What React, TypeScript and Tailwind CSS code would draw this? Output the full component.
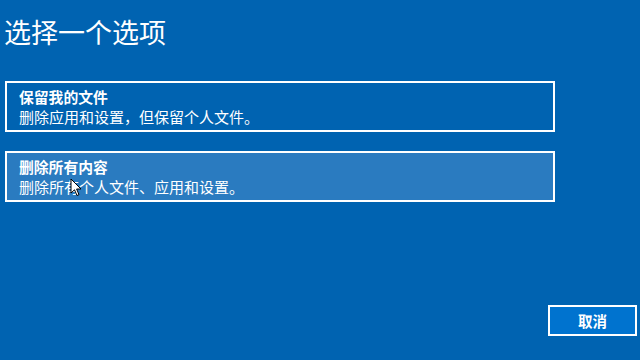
import React from 'react';

const font = { fontFamily: '"Noto Sans CJK SC", "Noto Sans", sans-serif' };

function Option({ title, desc, hover }: { title: string; desc: string; hover?: boolean }) {
  return (
    <button
      type="button"
      className={
        'flex h-[51px] w-[550px] flex-col justify-center border-2 border-white px-[12px] text-left text-white ' +
        (hover ? 'bg-[#2a7bc0]' : 'bg-[#0063b1]')
      }
    >
      <span className="text-[14.8px] font-bold leading-[19.5px]">{title}</span>
      <span className="text-[15px] leading-[19.5px]">{desc}</span>
    </button>
  );
}

export default function App() {
  return (
    <div className="relative flex h-[360px] w-[640px] flex-col overflow-hidden bg-[#0063b1] text-white" style={font}>
      <h1 className="ml-[4px] mt-[15px] text-[27px] font-normal leading-[34px]">选择一个选项</h1>

      <div className="ml-[5px] mt-[32px] flex flex-col gap-[19px]">
        <Option title="保留我的文件" desc="删除应用和设置，但保留个人文件。" />
        <Option title="删除所有内容" desc="删除所有个人文件、应用和设置。" hover />
      </div>

      <div className="mt-auto mb-[24px] mr-[3px] flex justify-end">
        <button
          type="button"
          className="flex h-[31px] w-[89px] items-center justify-center border-2 border-white bg-[#0073cf] text-[14.5px] font-bold text-white"
        >
          取消
        </button>
      </div>

      {/* mouse pointer */}
      <svg className="absolute left-[70px] top-[178px]" width="12" height="19" viewBox="0 0 12 19">
        <path d="M1 1 L1 15 L4.5 11.8 L7 17.5 L9 16.6 L6.6 11 L11 11 Z" fill="white" stroke="black" strokeWidth="1" />
      </svg>
    </div>
  );
}
